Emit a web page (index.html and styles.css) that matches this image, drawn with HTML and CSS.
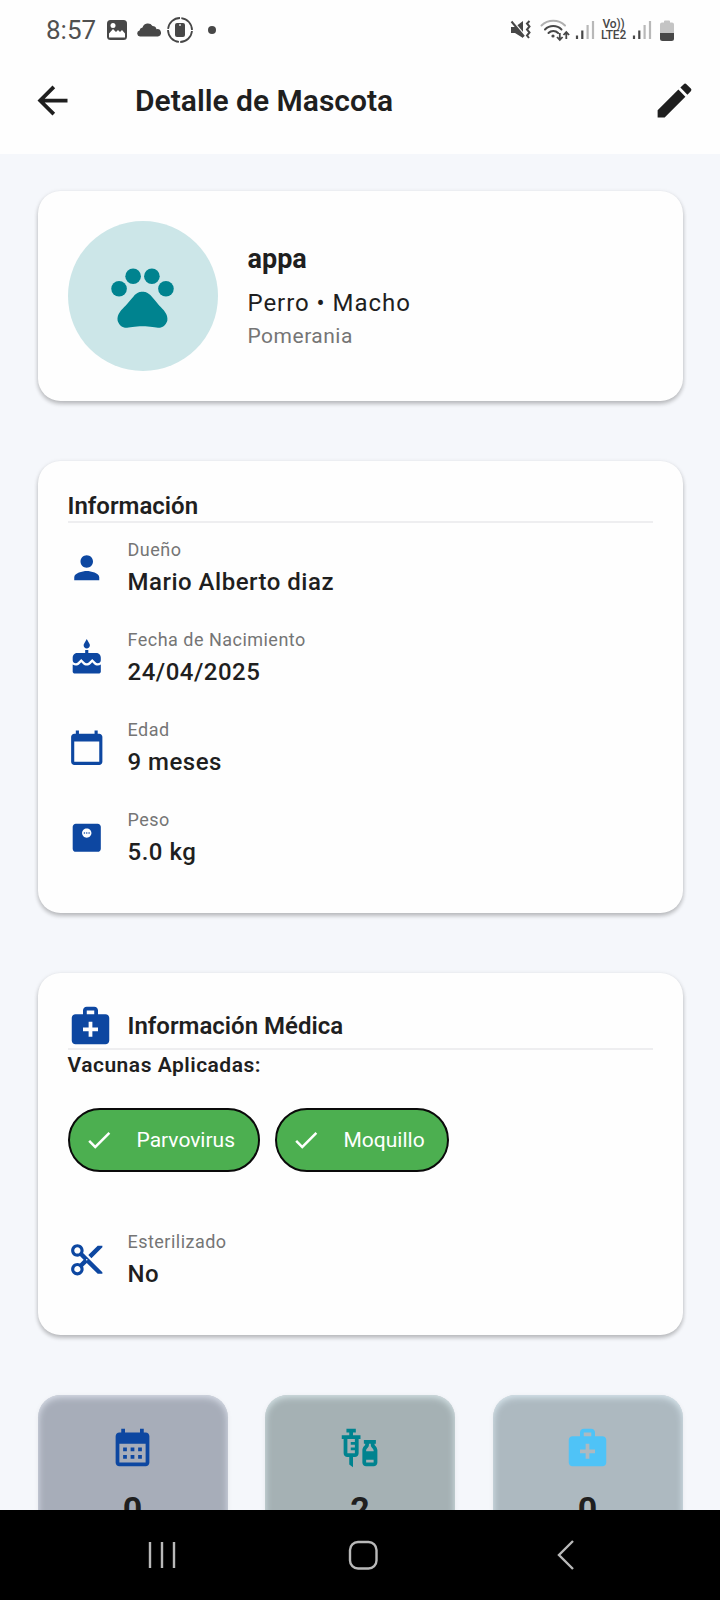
FILE: index.html
```
<!DOCTYPE html>
<html lang="es">
<head>
  <meta charset="UTF-8">
  <meta name="viewport" content="width=device-width, initial-scale=1.0">
  <title>Detalle de Mascota</title>
  <link rel="stylesheet" href="styles.css">
</head>
<body>

<div class="screen">
  <!-- Status bar -->
  <div class="status-bar">
    <div class="status-left">
      <span class="clock">8:57</span>
      <svg class="st-photo" width="22" height="22" viewBox="0 0 22 22">
        <rect x="1" y="1" width="20" height="20" rx="3.500" fill="#474747"/>
        <path d="M3 18.500v-4l4-4.500 3 3 2-2 2 2 2-2 3 3.500v4z" fill="#fff"/>
        <circle cx="7" cy="6.500" r="2.500" fill="#fff"/>
      </svg>
      <svg class="st-cloud" width="24" height="14" viewBox="0 0 24 14">
        <path d="M3 13.500a3 3 0 0 1-.5-5.900A3.600 3.600 0 0 1 5.500 4.500 5.600 5.600 0 0 1 15.500 3a4.200 4.200 0 0 1 4 3.200 3.700 3.700 0 0 1 1.500 7.300z" fill="#474747"/>
      </svg>
      <svg class="st-device" width="26" height="26" viewBox="0 0 26 26">
        <circle cx="13" cy="13" r="12" fill="none" stroke="#474747" stroke-width="1.800" stroke-dasharray="17.500 1.350" stroke-dashoffset="-1"/>
        <rect x="8" y="6" width="10" height="14" rx="2" fill="#474747"/>
        <circle cx="13" cy="8" r="1" fill="#ddd"/>
      </svg>
      <span class="st-dot"></span>
    </div>
    <div class="status-right">
      <svg class="st-mute" width="21" height="20" viewBox="0 0 21 20">
        <path d="M1 7h4l8-6v17l-8-5H1z" fill="#474747"/>
        <path d="M1 -1l14 17" stroke="#fff" stroke-width="2"/>
        <path d="M1.500 1.500l12.500 15" stroke="#474747" stroke-width="2"/>
        <path d="M19.500 1l-2.500 2.500 2.500 3-2.500 3 2.500 3-2.500 3 2 2.500" fill="none" stroke="#474747" stroke-width="2"/>
      </svg>
      <svg class="st-wifi" width="30" height="23" viewBox="0 0 30 23">
        <g fill="none" stroke-width="2" stroke-linecap="round">
          <path d="M1.500 6.500c6.500-6.300 17-6.300 23.500 0" stroke="#b0b0b0"/>
          <path d="M5 10.500c4.500-4.600 12-4.600 16.500 0" stroke="#474747"/>
          <path d="M8.500 14c2.600-2.700 7-2.700 9.600 0" stroke="#474747"/>
        </g>
        <circle cx="13" cy="17" r="1.600" fill="#474747"/>
        <path d="M19.800 14v6M17 18l2.800 3 2.800-3M26.300 20v-6M23.500 16l2.800-3 2.800 3" fill="none" stroke="#474747" stroke-width="1.800"/>
      </svg>
      <svg class="st-signal" width="20" height="20" viewBox="0 0 20 20">
        <path d="M2 15.500V19M7.300 10.500V19" stroke="#474747" stroke-width="2.200"/>
        <path d="M12.600 5V19M18 1V19" stroke="#b8b8b8" stroke-width="2.200"/>
      </svg>
      <div class="volte"><span>Vo))</span><span>LTE2</span></div>
      <svg class="st-signal" width="20" height="20" viewBox="0 0 20 20">
        <path d="M2 15.500V19M7.300 10.500V19" stroke="#474747" stroke-width="2.200"/>
        <path d="M12.600 5V19M18 1V19" stroke="#b8b8b8" stroke-width="2.200"/>
      </svg>
      <svg class="st-battery" width="14" height="21" viewBox="0 0 14 21">
        <path d="M2 2.500h2V1.500Q4 .5 5 .5h4q1 0 1 1v1h2q2 0 2 2V13H0V4.500q0-2 2-2z" fill="#c4c4c4"/>
        <path d="M0 13h14v5.500q0 2.500-2.500 2.500h-9Q0 21 0 18.500z" fill="#474747"/>
      </svg>
    </div>
  </div>

  <!-- App bar -->
  <header class="app-bar">
    <svg class="icon back" viewBox="0 0 24 24"><path d="M20 11H7.830l5.590-5.590L12 4l-8 8 8 8 1.410-1.410L7.830 13H20v-2z"/></svg>
    <h1>Detalle de Mascota</h1>
    <svg class="icon edit" viewBox="0 0 24 24"><path d="M3 17.250V21h3.750L17.810 9.940l-3.750-3.750L3 17.250zM20.710 7.040c.39-.39.39-1.020 0-1.410l-2.340-2.340c-.39-.39-1.020-.39-1.410 0l-1.830 1.830 3.750 3.750 1.830-1.830z"/></svg>
  </header>

  <main class="content">
    <section class="card pet-card">
      <div class="avatar">
        <svg class="icon" viewBox="0 0 24 24">
          <circle cx="4.500" cy="9.500" r="2.500"/><circle cx="9" cy="5.500" r="2.500"/><circle cx="15" cy="5.500" r="2.500"/><circle cx="19.500" cy="9.500" r="2.500"/>
          <path d="M17.340 14.860c-.87-1.020-1.600-1.890-2.480-2.910-.46-.54-1.050-1.080-1.750-1.320-.11-.04-.22-.07-.33-.09-.25-.04-.52-.04-.78-.04s-.53 0-.79.05c-.11.02-.22.05-.33.09-.7.24-1.280.78-1.750 1.320-.87 1.020-1.600 1.890-2.480 2.910-1.310 1.310-2.920 2.760-2.620 4.790.29 1.020 1.020 2.030 2.330 2.320.73.15 3.060-.44 5.540-.44h.18c2.480 0 4.810.58 5.540.44 1.310-.29 2.040-1.310 2.330-2.320.31-2.040-1.300-3.490-2.610-4.800z"/>
        </svg>
      </div>
      <div class="pet-text">
        <h2>appa</h2>
        <p class="pet-kind">Perro • Macho</p>
        <p class="pet-breed">Pomerania</p>
      </div>
    </section>

    <section class="card">
      <h3 class="card-title">Información</h3>
      <hr>
      <div class="info-row">
        <svg class="icon" viewBox="0 0 24 24"><path d="M12 12c2.210 0 4-1.790 4-4s-1.790-4-4-4-4 1.790-4 4 1.790 4 4 4zm0 2c-2.670 0-8 1.340-8 4v2h16v-2c0-2.660-5.330-4-8-4z"/></svg>
        <div><p class="label">Dueño</p><p class="value">Mario Alberto diaz</p></div>
      </div>
      <div class="info-row">
        <svg class="icon" viewBox="0 0 24 24"><path d="M12 6c1.110 0 2-.9 2-2 0-.38-.1-.73-.29-1.030L12 0l-1.710 2.970c-.19.3-.29.650-.29 1.030 0 1.100.9 2 2 2zm4.600 9.990l-1.070-1.070-1.080 1.070c-1.300 1.300-3.580 1.310-4.890 0l-1.070-1.070-1.090 1.070C6.750 16.640 5.880 17 4.960 17c-.73 0-1.400-.23-1.960-.61V21c0 .55.45 1 1 1h16c.55 0 1-.45 1-1v-4.610c-.56.38-1.230.61-1.960.61-.92 0-1.790-.36-2.440-1.010zM18 9h-5V7h-2v2H6c-1.660 0-3 1.340-3 3v1.540c0 1.080.88 1.960 1.960 1.960.52 0 1.020-.2 1.380-.57l2.140-2.130 2.130 2.130c.74.74 2.030.74 2.770 0l2.140-2.130 2.130 2.130c.37.37.86.57 1.380.57 1.080 0 1.960-.88 1.960-1.960V12C21 10.340 19.660 9 18 9z"/></svg>
        <div><p class="label">Fecha de Nacimiento</p><p class="value">24/04/2025</p></div>
      </div>
      <div class="info-row">
        <svg class="icon" viewBox="0 0 24 24"><path d="M20 3h-1V1h-2v2H7V1H5v2H4c-1.100 0-2 .9-2 2v16c0 1.100.9 2 2 2h16c1.100 0 2-.9 2-2V5c0-1.100-.9-2-2-2zm0 18H4V8h16v13z"/></svg>
        <div><p class="label">Edad</p><p class="value">9 meses</p></div>
      </div>
      <div class="info-row">
        <svg class="icon" viewBox="0 0 24 24"><path fill-rule="evenodd" d="M19 3H5c-1.100 0-2 .9-2 2v14c0 1.100.9 2 2 2h14c1.100 0 2-.9 2-2V5c0-1.100-.9-2-2-2zm-7 9c-1.660 0-3-1.340-3-3s1.340-3 3-3 3 1.340 3 3-1.340 3-3 3z"/><circle cx="10.500" cy="9" r=".5"/><circle cx="12" cy="9" r=".5"/><circle cx="13.500" cy="9" r=".5"/></svg>
        <div><p class="label">Peso</p><p class="value">5.0 kg</p></div>
      </div>
    </section>

    <section class="card">
      <div class="medical-head">
        <svg class="icon" viewBox="0 0 24 24"><path d="M20 6h-4V4c0-1.100-.9-2-2-2h-4c-1.100 0-2 .9-2 2v2H4c-1.100 0-2 .9-2 2v12c0 1.100.9 2 2 2h16c1.100 0 2-.9 2-2V8c0-1.100-.9-2-2-2zM10 4h4v2h-4V4zm6 11h-3v3h-2v-3H8v-2h3v-3h2v3h3v2z"/></svg>
        <h3 class="card-title">Información Médica</h3>
      </div>
      <hr>
      <h4>Vacunas Aplicadas:</h4>
      <div class="chips">
        <div class="chip">
          <svg class="icon" viewBox="0 0 24 24"><path d="M9 16.170L4.830 12l-1.420 1.410L9 19 21 7l-1.410-1.410z"/></svg>
          <span>Parvovirus</span>
        </div>
        <div class="chip">
          <svg class="icon" viewBox="0 0 24 24"><path d="M9 16.170L4.830 12l-1.420 1.410L9 19 21 7l-1.410-1.410z"/></svg>
          <span>Moquillo</span>
        </div>
      </div>
      <div class="info-row">
        <svg class="icon" viewBox="0 0 24 24"><path d="M9.640 7.640c.23-.5.36-1.050.36-1.640 0-2.210-1.790-4-4-4S2 3.790 2 6s1.790 4 4 4c.59 0 1.140-.13 1.640-.36L10 12l-2.360 2.360C7.140 14.130 6.590 14 6 14c-2.210 0-4 1.790-4 4s1.790 4 4 4 4-1.790 4-4c0-.59-.13-1.140-.36-1.640L12 14l7 7h3v-1L9.640 7.640zM6 8c-1.100 0-2-.89-2-2s.9-2 2-2 2 .89 2 2-.9 2-2 2zm0 12c-1.100 0-2-.89-2-2s.9-2 2-2 2 .89 2 2-.9 2-2 2zm6-7.500c-.28 0-.5-.22-.5-.5s.22-.5.5-.5.5.22.5.5-.22.5-.5.5zM19 3l-6 6 2 2 7-7V3z"/></svg>
        <div><p class="label">Esterilizado</p><p class="value">No</p></div>
      </div>
    </section>

    <section class="stats">
      <div class="stat stat-blue">
        <svg class="icon" viewBox="0 0 24 24"><path d="M19 4h-1V2h-2v2H8V2H6v2H5c-1.110 0-1.990.9-1.990 2L3 20c0 1.100.89 2 2 2h14c1.100 0 2-.9 2-2V6c0-1.100-.9-2-2-2zm0 16H5V10h14v10zM9 14H7v-2h2v2zm4 0h-2v-2h2v2zm4 0h-2v-2h2v2zm-8 4H7v-2h2v2zm4 0h-2v-2h2v2zm4 0h-2v-2h2v2z"/></svg>
        <span>0</span>
      </div>
      <div class="stat stat-teal">
        <svg class="icon" viewBox="0 0 24 24"><path d="M11 5.500H8V4h1.500V2h-5v2H6v1.500H2v2h1V15c0 1.100.9 2 2 2h1v4l2 1.500V17h1c1.100 0 2-.9 2-2V7.500h1v-2zM9 9H6.800v1.500H9V12H6.800v1.500H9V15H5V7.500h4V9zM19.500 10.500V10h.7V8h-6.400v2h.7v.5c0 .5-1.500 1.160-1.500 3V20c0 1.100.9 2 2 2h4c1.100 0 2-.9 2-2v-6.500c0-1.840-1.500-2.500-1.500-3zm-3 0V10h1v.5c0 1.600 1.500 2 1.500 3v.5h-4v-.5c0-1 1.500-1.400 1.500-3zM15 20v-1.500h4V20h-4z"/></svg>
        <span>2</span>
      </div>
      <div class="stat stat-sky">
        <svg class="icon" viewBox="0 0 24 24"><path d="M20 6h-4V4c0-1.100-.9-2-2-2h-4c-1.100 0-2 .9-2 2v2H4c-1.100 0-2 .9-2 2v12c0 1.100.9 2 2 2h16c1.100 0 2-.9 2-2V8c0-1.100-.9-2-2-2zM10 4h4v2h-4V4zm6 11h-3v3h-2v-3H8v-2h3v-3h2v3h3v2z"/></svg>
        <span>0</span>
      </div>
    </section>
  </main>

  <!-- System navigation -->
  <nav class="nav-bar">
    <svg width="30" height="32" viewBox="0 0 30 32"><path d="M3 3v26M15 3v26M27 3v26"/></svg>
    <svg width="32" height="32" viewBox="0 0 32 32"><rect x="3" y="3" width="26.500" height="26.500" rx="8"/></svg>
    <svg class="nav-back" width="20" height="32" viewBox="0 0 20 32"><path d="M17 2L3 16l14 14"/></svg>
  </nav>
</div>

</body>
</html>
```
FILE: styles.css
```
* {
  box-sizing: border-box;
}

body {
  margin: 0;
  background-color: #f5f7fb;
  color: #1f1f1f;
  font-family: Roboto, sans-serif;
}

h1, h2, h3, h4, p {
  margin: 0;
}

svg {
  display: block;
  flex-shrink: 0;
}

.icon {
  fill: currentColor;
}

.screen {
  display: flex;
  flex-direction: column;
  width: 720px;
  height: 1600px;
  overflow: hidden;
}

/* Status bar */
.status-bar {
  display: flex;
  justify-content: space-between;
  align-items: center;
  flex-shrink: 0;
  height: 60px;
  padding: 0 46px;
  background-color: #fefefe;
}

.status-left,
.status-right {
  display: flex;
  align-items: center;
}

.clock {
  width: 60px;
  font-size: 26px;
  color: #505050;
}

.st-cloud {
  margin-left: 9px;
}

.st-device {
  margin-left: 6px;
}

.st-dot {
  width: 8px;
  height: 8px;
  margin-left: 15px;
  border-radius: 50%;
  background-color: #474747;
}

.st-wifi {
  margin-left: 9px;
}

.st-signal {
  margin-left: 5px;
}

.volte {
  display: flex;
  flex-direction: column;
  align-items: center;
  width: 27px;
  margin-left: 5px;
  font-size: 12px;
  font-weight: 500;
  letter-spacing: -0.2px;
  line-height: 11.5px;
  color: #474747;
}

.st-battery {
  margin-left: 8px;
}

/* App bar */
.app-bar {
  display: flex;
  align-items: center;
  flex-shrink: 0;
  height: 93.6px;
  padding: 0 23px 12px 30px;
  background-color: #fefefe;
}

.app-bar .icon {
  width: 45px;
  height: 45px;
}

.app-bar h1 {
  flex: 1;
  margin-left: 60px;
  font-size: 30px;
  font-weight: 600;
}

/* Content */
.content {
  display: flex;
  flex-direction: column;
  flex: 1;
  gap: 60px;
  min-height: 0;
  padding: 37.5px 37.5px 0;
  overflow: hidden;
}

.card {
  flex-shrink: 0;
  padding: 30px;
  border-radius: 22.5px;
  background-color: #fefefe;
  box-shadow: 0 3px 4px rgba(0, 0, 0, 0.2), 0 1px 5px rgba(0, 0, 0, 0.1);
}

.pet-card {
  display: flex;
  align-items: center;
  gap: 30px;
}

.avatar {
  display: flex;
  align-items: center;
  justify-content: center;
  width: 150px;
  height: 150px;
  border-radius: 50%;
  background-color: #cce6e8;
  color: #00838f;
}

.avatar .icon {
  width: 75px;
  height: 75px;
}

.pet-text h2 {
  font-size: 27px;
  font-weight: 700;
  line-height: 36px;
}

.pet-kind {
  margin-top: 8px;
  font-size: 24px;
  letter-spacing: 0.95px;
  line-height: 36px;
}

.pet-breed {
  font-size: 21px;
  letter-spacing: 0.5px;
  line-height: 30px;
  color: #757575;
}

.card-title {
  padding-top: 1px;
  font-size: 24px;
  font-weight: 600;
  line-height: 29px;
}

hr {
  height: 2px;
  margin: 0;
  border: none;
  background-color: #eeeef0;
}

.info-row {
  display: flex;
  align-items: center;
  gap: 22.5px;
  height: 90px;
}

.info-row .icon {
  width: 37.5px;
  height: 37.5px;
  color: #0d47a1;
}

.label {
  font-size: 18px;
  letter-spacing: 0.48px;
  line-height: 28px;
  color: #757575;
}

.value {
  font-size: 24px;
  font-weight: 500;
  letter-spacing: 0.5px;
  line-height: 36px;
}

.medical-head {
  display: flex;
  align-items: center;
  gap: 15px;
}

.medical-head .icon {
  width: 45px;
  height: 45px;
  color: #0d47a1;
}

h4 {
  padding-top: 1px;
  font-size: 21px;
  font-weight: 600;
  letter-spacing: 0.5px;
  line-height: 29px;
}

.chips {
  display: flex;
  gap: 15px;
  padding: 27.5px 0 43px;
}

.chip {
  display: flex;
  align-items: center;
  gap: 22.5px;
  height: 64px;
  padding: 0 22.5px 0 14.5px;
  border: 2px solid #0a0a0a;
  border-radius: 32px;
  background-color: #4caf50;
  color: #fff;
  font-size: 21px;
}

.chip .icon {
  width: 30px;
  height: 30px;
}

/* Counters */
.stats {
  display: grid;
  grid-template-columns: repeat(3, 1fr);
  gap: 37.5px;
}

.stat {
  display: flex;
  flex-direction: column;
  align-items: center;
  height: 190px;
  padding-top: 30px;
  border-radius: 22.5px;
  font-size: 34px;
  font-weight: 700;
}

.stat .icon {
  width: 45px;
  height: 45px;
  margin-bottom: 19px;
}

.stat-blue {
  background-color: #a7adb9;
  box-shadow: inset 0 2px 7px #dde2ec, 0 1px 5px rgba(0, 0, 0, 0.06);
}

.stat-teal {
  background-color: #a5b1b4;
  box-shadow: inset 0 2px 7px #d8e6e9, 0 1px 5px rgba(0, 0, 0, 0.06);
}

.stat-sky {
  background-color: #adb9c0;
  box-shadow: inset 0 2px 7px #dceaf1, 0 1px 5px rgba(0, 0, 0, 0.06);
}

.stat-blue .icon {
  color: #0d47a1;
}

.stat-teal .icon {
  color: #00838f;
}

.stat-sky .icon {
  color: #4fc3f7;
}

/* System navigation */
.nav-bar {
  display: flex;
  align-items: center;
  flex-shrink: 0;
  height: 90px;
  padding-left: 147px;
  background-color: #000;
}

.nav-bar svg {
  fill: none;
  stroke: #b9b9b9;
  stroke-width: 2.4;
}

.nav-bar svg + svg {
  margin-left: 170px;
}

.nav-bar svg + .nav-back {
  margin-left: 177px;
}
```
